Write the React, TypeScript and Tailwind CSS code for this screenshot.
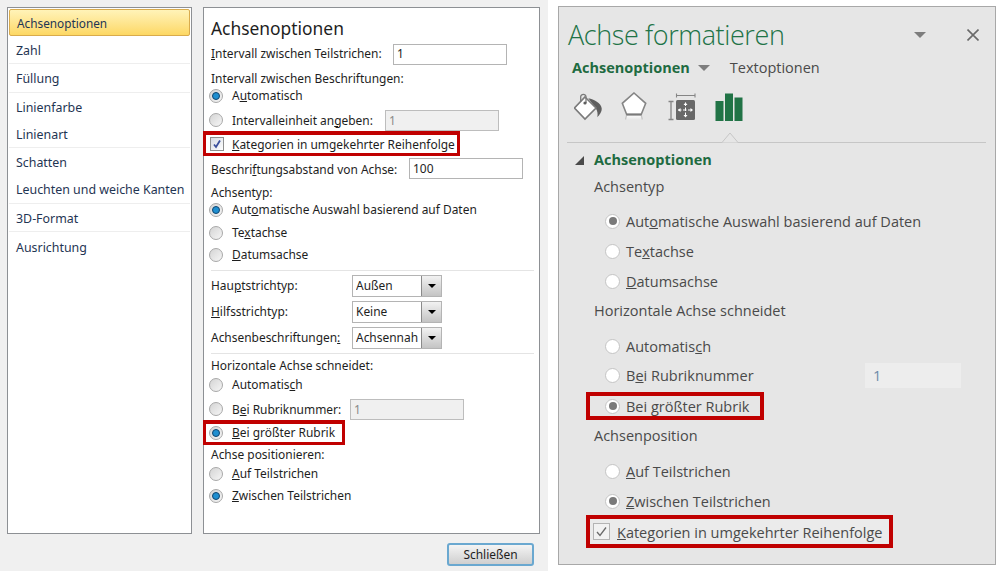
import type { ReactNode } from "react";

function Radio({ checked = false }: { checked?: boolean }) {
  return (
    <span className="flex h-[14px] w-[14px] shrink-0 items-center justify-center rounded-full border border-[#a8a8a8] bg-gradient-to-br from-[#d4d4d4] to-[#f6f6f6]">
      {checked && <span className="h-[8px] w-[8px] rounded-full border border-[#10456f] bg-[#1f8fd0]" />}
    </span>
  );
}

function OldRadioRow({ checked, className = "", children }: { checked?: boolean; className?: string; children: ReactNode }) {
  return (
    <div className={`-ml-[2px] flex h-[18px] items-center gap-[9px] ${className}`}>
      <Radio checked={checked} />
      <span>{children}</span>
    </div>
  );
}

function OldInput({ value, disabled = false, className = "" }: { value: string; disabled?: boolean; className?: string }) {
  return (
    <span
      className={`flex h-[21px] w-[114px] items-center border px-[3px] ${
        disabled ? "border-[#bdbdbd] bg-[#f0f0f0] text-[#8a8a8a]" : "border-[#b4b4b4] bg-white"
      } ${className}`}
    >
      {value}
    </span>
  );
}

function OldSelect({ value }: { value: string }) {
  return (
    <span className="flex h-[22px] w-[90px] items-center border border-[#b4b4b4] bg-white pl-[3px]">
      <span className="flex-1 overflow-hidden whitespace-nowrap">{value}</span>
      <span className="flex h-[20px] w-[20px] shrink-0 items-center justify-center border-l border-[#8a8a8a] bg-gradient-to-b from-[#f2f2f2] to-[#c4c4c4]">
        <span className="h-0 w-0 border-x-[4px] border-t-[4px] border-x-transparent border-t-black" />
      </span>
    </span>
  );
}

function OldSelectRow({ label, value, className = "" }: { label: ReactNode; value: string; className?: string }) {
  return (
    <div className={`flex h-[22px] items-center ${className}`}>
      <span className="w-[141px]">{label}</span>
      <OldSelect value={value} />
    </div>
  );
}

function NavItem({ label, active = false, h, sep = false }: { label: string; active?: boolean; h: string; sep?: boolean }) {
  return (
    <div
      className={`flex items-center pl-[7px] pt-[3px] ${h} ${
        active
          ? "rounded-[2px] border border-[#d9ab4c] bg-gradient-to-b from-[#fff3b8] to-[#fdd863] text-[11.8px]"
          : "text-[12.4px]"
      } ${sep ? "border-b border-[#eeeeee]" : ""}`}
    >
      {label}
    </div>
  );
}

function NewRadioRow({ checked, className = "", children }: { checked?: boolean; className?: string; children: ReactNode }) {
  return (
    <div className={`flex h-[18px] items-center gap-[6px] pl-[46px] ${className}`}>
      <NewRadio checked={checked} />
      <span className="pt-[1px]">{children}</span>
    </div>
  );
}

function NewRadio({ checked = false }: { checked?: boolean }) {
  return (
    <span className="flex h-[15px] w-[15px] shrink-0 items-center justify-center rounded-full border border-[#c4c4c4] bg-white">
      {checked && <span className="h-[8px] w-[8px] rounded-full bg-[#7a7a7a]" />}
    </span>
  );
}

function BucketIcon() {
  return (
    <svg width="28" height="28" viewBox="0 0 28 28" className="block">
      <path d="M14.300 5.300C20 6.500 27 10 27.700 15.300C28 19 25.500 22 23.300 24.300C24 21 23.500 18 21.700 15.300z" fill="#5f5f5f" />
      <path d="M11 4L22 15L11 26L.5 15z" fill="#fff" stroke="#7a7a7a" strokeWidth="1.600" />
      <path d="M6.700 8.500V3.500a2.700 2.700 0 0 1 5.300 0V10" fill="none" stroke="#7a7a7a" strokeWidth="1.300" />
      <circle cx="11" cy="10" r="1.600" fill="#5f5f5f" />
    </svg>
  );
}

function PentagonIcon() {
  return (
    <svg width="26" height="30" viewBox="0 0 26 30" className="block">
      <defs>
        <linearGradient id="fade" x1="0" y1="0" x2="0" y2="1">
          <stop offset="0" stopColor="#ffffff" />
          <stop offset="1" stopColor="#e6e6e6" />
        </linearGradient>
      </defs>
      <path d="M5.700 22.500h14.500l1 5.500H4.500z" fill="url(#fade)" />
      <path d="M5.700 22.500L4.500 27.500M20.200 22.500L21.300 27.500" stroke="#c4c4c4" strokeWidth="1.200" />
      <path d="M13 1L24.700 11.300L20.200 22.500H5.700L1.300 11.300z" fill="#fff" stroke="#858585" strokeWidth="1.600" />
      <path d="M5.700 22.500h14.500" stroke="#7a7a7a" strokeWidth="2" />
    </svg>
  );
}

function LayoutIcon() {
  return (
    <svg width="30" height="28" viewBox="0 0 30 28" className="block">
      <path d="M9.500 2.500H28M9.500 .5v4M28 .5v4" stroke="#858585" strokeWidth="1.100" fill="none" />
      <path d="M1.500 8.500h5M1.500 26.500h5M4 8.500v18" stroke="#858585" strokeWidth="1.300" fill="none" />
      <rect x="9" y="7" width="19" height="20" rx="1.500" fill="#686868" />
      <path d="M11 17h15M18.500 9.500v15" stroke="#fff" strokeWidth="1" strokeDasharray="3.500 1.500" />
      <path d="M11 17l2.500-2v4zM26 17l-2.500-2v4zM18.500 9.500l-2 2.500h4zM18.500 24.500l-2-2.500h4z" fill="#fff" />
    </svg>
  );
}

function ChartIcon() {
  return (
    <svg width="28" height="28" viewBox="0 0 28 28" className="block">
      <path d="M0.500 8h8v20h-8zM10 0.500h8V28h-8zM19.500 4.500h8V28h-8z" fill="#217346" />
    </svg>
  );
}

export default function App() {
  return (
    <div className="flex h-[571px] w-[1000px] overflow-hidden bg-white">
      {/* Excel 2010 dialog */}
      <div className="w-[548px] shrink-0 bg-[#f0f0f0] pl-[7px] pt-[7px] font-['Noto_Sans',sans-serif] text-[11.95px] text-[#1e1e1e]">
        <div className="flex gap-[11px]">
          <div className="box-border h-[527px] w-[185px] border border-[#8d9094] bg-white px-[1px] pt-[1px] text-[#1f3553]">
            <NavItem label="Achsenoptionen" active h="h-[27px]" />
            <NavItem label="Zahl" h="h-[28px]" sep />
            <NavItem label="Füllung" h="h-[29px]" sep />
            <NavItem label="Linienfarbe" h="h-[27px]" />
            <NavItem label="Linienart" h="h-[28px]" sep />
            <NavItem label="Schatten" h="h-[27px]" />
            <NavItem label="Leuchten und weiche Kanten" h="h-[29px]" sep />
            <NavItem label="3D-Format" h="h-[28px]" sep />
            <NavItem label="Ausrichtung" h="h-[30px]" />
          </div>

          <div className="box-border h-[527px] w-[337px] border border-[#8d9094] bg-white pl-[7px] pr-[5px]">
            <div className="flex h-[36px] items-end pb-[3px] text-[17.4px] leading-[26px]">Achsenoptionen</div>
            <div className="flex h-[20px] items-center">
              <span className="w-[182px]"><u>I</u>ntervall zwischen Teilstrichen:</span>
              <OldInput value="1" />
            </div>
            <div className="mt-[4px] flex h-[18px] items-center pt-[4px]">Intervall zwischen Beschriftungen:</div>
            <OldRadioRow checked className="pt-[1px]">A<u>u</u>tomatisch</OldRadioRow>
            <div className="mt-[6px] flex h-[21px] items-center">
              <div className="-ml-[2px] flex w-[176px] items-center gap-[9px]">
                <Radio />
                <span>Intervalleinheit an<u>g</u>eben:</span>
              </div>
              <OldInput value="1" disabled />
            </div>
            <div className="-ml-[8px] box-border flex h-[25px] w-[257px] items-center gap-[8px] border-[3px] border-t-[4px] border-[#c00000] pl-[4px]">
              <span className="flex h-[14px] w-[14px] shrink-0 items-center justify-center border border-[#8e8f8f] bg-gradient-to-br from-[#d6dbe4] to-white">
                <svg width="10" height="10" viewBox="0 0 10 10"><path d="M2 5.500l2 2.500l4-6.500" fill="none" stroke="#3a4f9c" strokeWidth="1.800" /></svg>
              </span>
              <span className="whitespace-nowrap pt-[2px]"><u>K</u>ategorien in umgekehrter Reihenfolge</span>
            </div>
            <div className="mt-[2px] flex h-[21px] items-center">
              <span className="w-[198px] pt-[2px]">Beschri<u>f</u>tungsabstand von Achse:</span>
              <OldInput value="100" />
            </div>
            <div className="mt-[4px] flex h-[18px] items-center pt-[2px]">Achsentyp:</div>
            <OldRadioRow checked>Aut<u>o</u>matische Auswahl basierend auf Daten</OldRadioRow>
            <OldRadioRow className="mt-[5px]">Te<u>x</u>tachse</OldRadioRow>
            <OldRadioRow className="mt-[4px]"><u>D</u>atumsachse</OldRadioRow>
            <div className="mt-[6px] h-px bg-[#e4e4e4]" />
            <OldSelectRow className="mt-[4px]" label={<>Hau<u>p</u>tstrichtyp:</>} value="Außen" />
            <OldSelectRow className="mt-[4px]" label={<><u>H</u>ilfsstrichtyp:</>} value="Keine" />
            <OldSelectRow className="mt-[4px]" label={<>Achsenbeschriftungen<u>:</u></>} value="Achsennah" />
            <div className="mt-[4px] h-px bg-[#e4e4e4]" />
            <div className="mt-[3px] flex h-[18px] items-center">Horizontale Achse schneidet:</div>
            <OldRadioRow className="mt-[1px]">Automatis<u>c</u>h</OldRadioRow>
            <div className="mt-[5px] flex h-[21px] items-center">
              <div className="-ml-[2px] flex w-[141px] items-center gap-[9px]">
                <Radio />
                <span>B<u>e</u>i Rubriknummer:</span>
              </div>
              <OldInput value="1" disabled />
            </div>
            <div className="-ml-[8px] box-border flex h-[25px] w-[142px] items-center gap-[9px] border-[3px] border-t-[4px] border-[#c00000] pl-[3px]">
              <Radio checked />
              <span className="whitespace-nowrap"><u>B</u>ei größter Rubrik</span>
            </div>
            <div className="mt-[1px] flex h-[18px] items-center">Achse positionieren:</div>
            <OldRadioRow className="mt-[1px]"><u>A</u>uf Teilstrichen</OldRadioRow>
            <OldRadioRow checked className="mt-[4px]"><u>Z</u>wischen Teilstrichen</OldRadioRow>
          </div>
        </div>
        <div className="mt-[9px] flex justify-end pr-[14px]">
          <button className="h-[23px] w-[87px] rounded-[3px] border-2 border-[#6aa8d0] bg-gradient-to-b from-[#f4f4f4] to-[#cfcfcf] text-[#1e1e1e]">
            Schließen
          </button>
        </div>
      </div>

      {/* Excel 2013 task pane */}
      <div className="ml-[10px] mt-[6px] box-border h-[559px] w-[438px] border border-[#a8a8a8] bg-[#e6e6e6] pt-[4px] font-['Open_Sans',sans-serif] text-[14.5px] text-[#4a4a4a]">
        <div className="flex h-[48px] items-center pl-[9px] pr-[16px]">
          <span className="flex-1 text-[27px] font-light tracking-[-0.4px] text-[#217346]">Achse formatieren</span>
          <span className="mr-[41px] h-0 w-0 border-x-[6px] border-t-[6px] border-x-transparent border-t-[#7d7d7d]" />
          <svg width="12" height="12" viewBox="0 0 12 12"><path d="M.5 .5l11 11M11.500 .5l-11 11" stroke="#6a6a6a" strokeWidth="1.600" /></svg>
        </div>
        <div className="flex h-[18px] items-center pl-[13px]">
          <span className="font-bold text-[#1e6b41]">Achsenoptionen</span>
          <span className="ml-[8px] h-0 w-0 border-x-[6px] border-t-[6px] border-x-transparent border-t-[#7d7d7d]" />
          <span className="ml-[20px]">Textoptionen</span>
        </div>
        <div className="mt-[15px] flex h-[30px] items-center pl-[15px]">
          <BucketIcon />
          <span className="ml-[19px]"><PentagonIcon /></span>
          <span className="ml-[20px]"><LayoutIcon /></span>
          <span className="ml-[18px]"><ChartIcon /></span>
        </div>
        <div className="relative ml-[8px] mr-[9px] mt-[20px] h-px bg-[#c6c6c6]">
          <svg width="18" height="11" viewBox="0 0 18 11" className="absolute -top-[10px] left-[154px]">
            <path d="M0 10.500h1L9 1l8 9.500h1" fill="#e6e6e6" stroke="#c6c6c6" strokeWidth="1" />
          </svg>
        </div>
        <div className="mt-[8px] flex h-[18px] items-center pl-[16px]">
          <svg width="9" height="9" viewBox="0 0 9 9" className="shrink-0"><path d="M9 0v9H0z" fill="#4a4a4a" /></svg>
          <span className="ml-[10px] font-bold text-[#1e6b41]">Achsenoptionen</span>
        </div>
        <div className="mt-[9px] flex h-[18px] items-center pl-[35px]">Achsentyp</div>
        <NewRadioRow checked className="mt-[16px]">Aut<u>o</u>matische Auswahl basierend auf Daten</NewRadioRow>
        <NewRadioRow className="mt-[12px]">Te<u>x</u>tachse</NewRadioRow>
        <NewRadioRow className="mt-[12px]"><u>D</u>atumsachse</NewRadioRow>
        <div className="mt-[12px] flex h-[18px] items-center pl-[35px]">Horizontale Achse schneidet</div>
        <NewRadioRow className="mt-[17px]">Automatis<u>c</u>h</NewRadioRow>
        <div className="mt-[8px] flex h-[25px] items-center">
          <NewRadioRow className="w-[306px]">B<u>e</u>i Rubriknummer</NewRadioRow>
          <span className="flex h-[25px] w-[96px] items-center bg-[#ededed] px-[8px] text-[#6d8aa8]">1</span>
        </div>
        <div className="ml-[27px] mt-[4px] box-border flex h-[28px] w-[178px] items-center gap-[6px] border-[4px] border-[#c00000] pl-[15px]">
          <NewRadio checked />
          <span className="whitespace-nowrap pt-[1px]">Bei <u>g</u>rößter Rubrik</span>
        </div>
        <div className="mt-[7px] flex h-[18px] items-center pl-[35px]">Achsenposition</div>
        <NewRadioRow className="mt-[17px]"><u>A</u>uf Teilstrichen</NewRadioRow>
        <NewRadioRow checked className="mt-[12px]"><u>Z</u>wischen Teilstrichen</NewRadioRow>
        <div className="ml-[27px] mt-[5px] box-border flex h-[33px] w-[307px] items-center gap-[7px] border-[4px] border-[#c00000] bg-[#ebebeb] pl-[3px]">
          <span className="flex h-[17px] w-[17px] shrink-0 items-center justify-center border border-[#b4b4b4] bg-[#f2f2f2]">
            <svg width="13" height="13" viewBox="0 0 13 13"><path d="M2 7l3 3.500L11 2.500" fill="none" stroke="#6a6a6a" strokeWidth="1.300" /></svg>
          </span>
          <span className="whitespace-nowrap pt-[2px]"><u>K</u>ategorien in umgekehrter Reihenfolge</span>
        </div>
      </div>
    </div>
  );
}
